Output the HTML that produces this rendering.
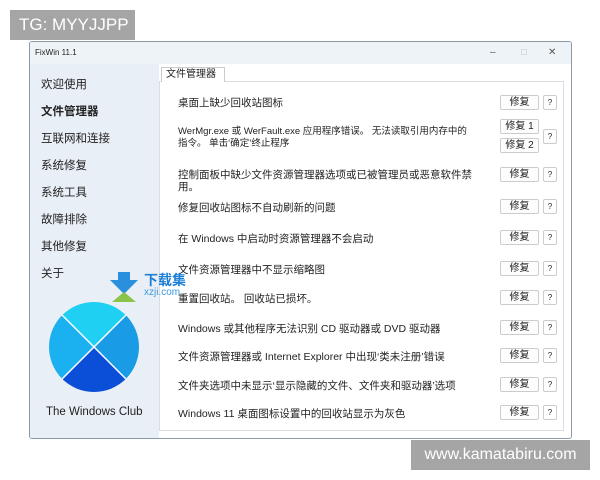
<!DOCTYPE html>
<html><head><meta charset="utf-8"><style>
*{margin:0;padding:0;box-sizing:border-box}
body{width:600px;height:480px;background:#fff;position:relative;overflow:hidden;font-family:"Liberation Sans","Noto Sans CJK SC",sans-serif;color:#222}
.tg{position:absolute;left:10px;top:10px;width:125px;height:30px;background:#a5a5a5;color:#fff;font-size:17px;line-height:30px;padding-left:9px}
.win{position:absolute;left:29px;top:41px;width:543px;height:398px;border:1px solid #8a9aa8;background:#fff;border-radius:3px;overflow:hidden}
.title{height:22px;background:#eef3f8;font-size:8px;line-height:22px;padding-left:5px;position:relative}
.ctl{position:absolute;top:0;font-size:10px;color:#555}
.side{position:absolute;left:0;top:22px;width:129px;bottom:0;background:#e9eff6}
.side div{position:absolute;left:11px;font-size:11.5px}
.tab{position:absolute;left:131px;top:25px;width:64px;height:15px;border:1px solid #ccc;border-bottom:none;background:#fff;font-size:10px;line-height:14px;padding-left:4px;z-index:2}
.panel{position:absolute;left:129px;top:39px;width:405px;height:350px;border:1px solid #ddd;background:#fff}
.r{position:absolute;left:148px;font-size:10.5px;line-height:12px;margin-top:1px}
.b{position:absolute;left:470px;width:39px;height:15px;border:1px solid #ccc;border-radius:2px;background:#fdfdfd;font-size:10px;text-align:center;line-height:13px}
.q{position:absolute;left:513px;width:14px;height:15px;border:1px solid #ccc;border-radius:2px;font-size:8px;text-align:center;line-height:13px}
.wm{position:absolute;left:411px;top:440px;width:179px;height:30px;background:#a5a5a5;color:#fff;font-size:16px;line-height:30px;text-align:center}
</style></head><body>
<div class="tg">TG: MYYJJPP</div>
<div class="win">
<div class="title">FixWin 11.1<span class="ctl" style="left:460px">–</span><span class="ctl" style="left:491px;color:#bbb">□</span><span class="ctl" style="left:518px">✕</span></div>
<div class="side">
<div style="top:12px">欢迎使用</div>
<div style="top:39px;font-weight:bold">文件管理器</div>
<div style="top:66px">互联网和连接</div>
<div style="top:93px">系统修复</div>
<div style="top:120px">系统工具</div>
<div style="top:147px">故障排除</div>
<div style="top:174px">其他修复</div>
<div style="top:201px">关于</div>
<svg style="position:absolute;left:18px;top:237px" width="92" height="92" viewBox="-46 -46 92 92">
<clipPath id="c"><circle r="45"/></clipPath>
<g clip-path="url(#c)">
<polygon points="0,0 -50,-50 50,-50" fill="#1fd0f2"/>
<polygon points="0,0 -50,-50 -50,50" fill="#1bb0f0"/>
<polygon points="0,0 50,-50 50,50" fill="#1a9be6"/>
<polygon points="0,0 -50,50 50,50" fill="#0b4fd8"/>
<line x1="-50" y1="-50" x2="50" y2="50" stroke="#fff" stroke-width="1.5"/>
<line x1="50" y1="-50" x2="-50" y2="50" stroke="#fff" stroke-width="1.5"/>
</g></svg>
<div style="top:342px;left:16px;font-size:11.5px">The Windows Club</div>
</div>
<div class="tab">文件管理器</div>
<div class="panel"></div>
<div class="r" style="top:54px">桌面上缺少回收站图标</div>
<div class="b" style="top:53px">修复</div><div class="q" style="top:53px">?</div>
<div class="r" style="top:83px;font-size:9.5px">WerMgr.exe 或 WerFault.exe 应用程序错误。 无法读取引用内存中的<br>指令。 单击‘确定’终止程序</div>
<div class="b" style="top:77px">修复 1</div><div class="b" style="top:96px">修复 2</div><div class="q" style="top:87px">?</div>
<div class="r" style="top:126px">控制面板中缺少文件资源管理器选项或已被管理员或恶意软件禁<br>用。</div>
<div class="b" style="top:125px">修复</div><div class="q" style="top:125px">?</div>
<div class="r" style="top:159px">修复回收站图标不自动刷新的问题</div>
<div class="b" style="top:157px">修复</div><div class="q" style="top:157px">?</div>
<div class="r" style="top:190px">在 Windows 中启动时资源管理器不会启动</div>
<div class="b" style="top:188px">修复</div><div class="q" style="top:188px">?</div>
<div class="r" style="top:221px">文件资源管理器中不显示缩略图</div>
<div class="b" style="top:219px">修复</div><div class="q" style="top:219px">?</div>
<div class="r" style="top:250px">重置回收站。 回收站已损坏。</div>
<div class="b" style="top:248px">修复</div><div class="q" style="top:248px">?</div>
<div class="r" style="top:280px">Windows 或其他程序无法识别 CD 驱动器或 DVD 驱动器</div>
<div class="b" style="top:278px">修复</div><div class="q" style="top:278px">?</div>
<div class="r" style="top:308px">文件资源管理器或 Internet Explorer 中出现‘类未注册’错误</div>
<div class="b" style="top:306px">修复</div><div class="q" style="top:306px">?</div>
<div class="r" style="top:337px">文件夹选项中未显示‘显示隐藏的文件、文件夹和驱动器’选项</div>
<div class="b" style="top:335px">修复</div><div class="q" style="top:335px">?</div>
<div class="r" style="top:365px">Windows 11 桌面图标设置中的回收站显示为灰色</div>
<div class="b" style="top:363px">修复</div><div class="q" style="top:363px">?</div>
</div>
<div style="position:absolute;left:110px;top:272px;width:30px;height:30px">
<svg width="30" height="30"><polygon points="8,0 20,0 20,8 28,8 14,22 0,8 8,8" fill="#2a8fdc"/><polygon points="2,30 14,20 26,30" fill="#8bc34a"/></svg></div>
<div style="position:absolute;left:144px;top:270px;font-size:14px;font-weight:bold;color:#1d7fd6">下载集</div>
<div style="position:absolute;left:144px;top:287px;font-size:10px;color:#3a9be0">xzji.com</div>
<div class="wm">www.kamatabiru.com</div>
</body></html>
